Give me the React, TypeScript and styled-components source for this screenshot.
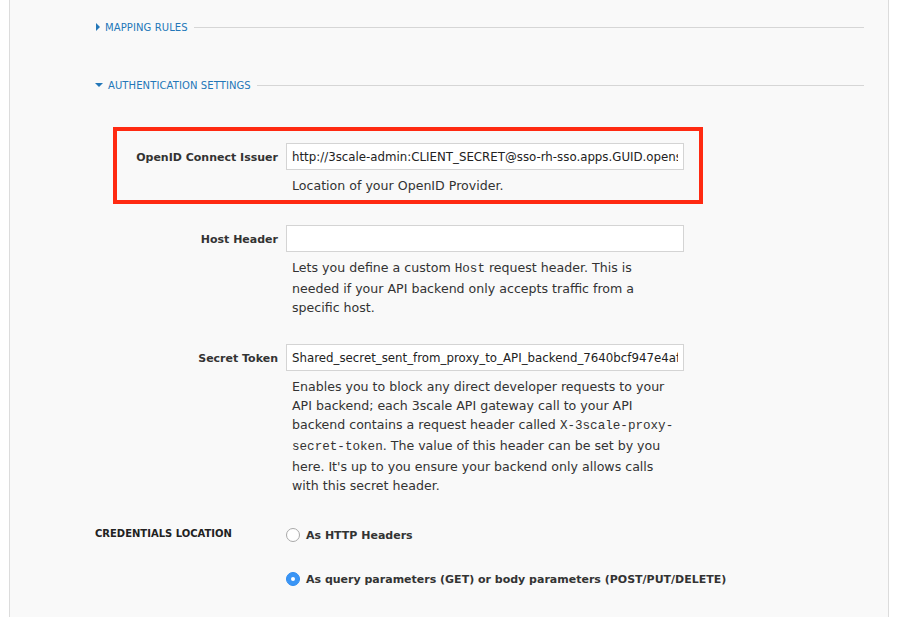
import React, { useState } from 'react'
import styled, { createGlobalStyle } from 'styled-components'

const GlobalStyle = createGlobalStyle`
  html, body {
    margin: 0;
    padding: 0;
    background: #ffffff;
  }
  body {
    font-family: "DejaVu Sans", "Liberation Sans", sans-serif;
    color: #333;
  }
`

const Panel = styled.div`
  margin-left: 9px;
  width: 880px;
  min-height: 617px;
  background: #f9f9f9;
  border-left: 1px solid #dcdcdc;
  border-right: 1px solid #dcdcdc;
  box-sizing: border-box;
  padding: 19px 24px 40px 85px;
`

const SectionHeader = styled.div<{ $open?: boolean }>`
  display: flex;
  align-items: center;
  gap: 5px;
  height: 16px;
  margin-bottom: ${p => (p.$open ? '34px' : '42px')};
  color: #2377b8;
  font-size: 10px;
  letter-spacing: 0.1px;
  text-transform: uppercase;
  cursor: pointer;
  &::after {
    content: '';
    flex: 1;
    height: 1px;
    background: #d6d6d6;
    margin-left: 1px;
  }
`

const Caret = styled.span<{ $open?: boolean }>`
  width: 0;
  height: 0;
  ${p =>
    p.$open
      ? `border-left: 4px solid transparent;
         border-right: 4px solid transparent;
         border-top: 4px solid #2377b8;`
      : `border-top: 4px solid transparent;
         border-bottom: 4px solid transparent;
         border-left: 4px solid #2377b8;
         margin-left: 1px;`}
`

const Fields = styled.div`
  display: flex;
  flex-direction: column;
  gap: 5px;
  margin-left: 18px;
`

const FieldRow = styled.div<{ $highlight?: boolean }>`
  width: 590px;
  box-sizing: border-box;
  border: 4px solid ${p => (p.$highlight ? '#ff2a12' : 'transparent')};
  padding: 12px 15px ${p => (p.$highlight ? '5px' : '2px')} 0;
  display: grid;
  grid-template-columns: 161px 398px;
  column-gap: 8px;
`

const Label = styled.label`
  text-align: right;
  font-weight: bold;
  font-size: 11px;
  color: #333;
  padding-top: 8px;
`

const Control = styled.div`
  display: flex;
  flex-direction: column;
`

const TextInput = styled.input`
  box-sizing: border-box;
  width: 398px;
  height: 27px;
  border: 1px solid #d4d4d4;
  background: #fff;
  padding: 0 5px;
  font-family: "DejaVu Sans", "Liberation Sans", sans-serif;
  font-size: 11.8px;
  color: #222;
  outline: none;
`

const Help = styled.p`
  margin: 6px 0 0;
  padding-left: 6px;
  width: 430px;
  white-space: nowrap;
  font-size: 12.6px;
  line-height: 19px;
  color: #333;
  code {
    font-family: "Liberation Mono", "DejaVu Sans Mono", monospace;
    font-size: 12.6px;
  }
`

const Credentials = styled.div`
  display: grid;
  grid-template-columns: 191px 1fr;
  margin: 26px 0 0 0;
`

const GroupTitle = styled.div`
  font-weight: bold;
  font-size: 10px;
  text-transform: uppercase;
  color: #222;
  padding-top: 1px;
`

const Options = styled.div`
  display: flex;
  flex-direction: column;
  gap: 28px;
`

const Option = styled.label`
  display: flex;
  align-items: center;
  gap: 6px;
  font-size: 11px;
  font-weight: bold;
  color: #333;
  height: 16px;
  cursor: pointer;
`

const Radio = styled.input.attrs({ type: 'radio' })`
  appearance: none;
  margin: 0;
  width: 14px;
  height: 14px;
  border-radius: 50%;
  border: 1px solid #a9a9a9;
  background: #fff;
  box-sizing: border-box;
  display: grid;
  place-items: center;
  &:checked {
    border-color: #2f8cf0;
    background: #3a95f5;
  }
  &:checked::after {
    content: '';
    width: 4px;
    height: 4px;
    border-radius: 50%;
    background: #fff;
  }
`

const App = () => {
  const [location, setLocation] = useState('query')

  return (
    <>
      <GlobalStyle />
      <Panel>
        <SectionHeader>
          <Caret />
          Mapping Rules
        </SectionHeader>
        <SectionHeader $open>
          <Caret $open />
          Authentication Settings
        </SectionHeader>

        <Fields>
          <FieldRow $highlight>
            <Label>OpenID Connect Issuer</Label>
            <Control>
              <TextInput
                defaultValue="http://3scale-admin:CLIENT_SECRET@sso-rh-sso.apps.GUID.openshift.example.com/auth/realms/3scale"
              />
              <Help>Location of your OpenID Provider.</Help>
            </Control>
          </FieldRow>

          <FieldRow>
            <Label>Host Header</Label>
            <Control>
              <TextInput defaultValue="" />
              <Help>
                Lets you define a custom <code>Host</code> request header. This is
                <br />
                needed if your API backend only accepts traffic from a
                <br />
                specific host.
              </Help>
            </Control>
          </FieldRow>

          <FieldRow>
            <Label>Secret Token</Label>
            <Control>
              <TextInput defaultValue="Shared_secret_sent_from_proxy_to_API_backend_7640bcf947e4af21" />
              <Help>
                Enables you to block any direct developer requests to your
                <br />
                API backend; each 3scale API gateway call to your API
                <br />
                backend contains a request header called <code>X-3scale-proxy-</code>
                <br />
                <code>secret-token</code>. The value of this header can be set by you
                <br />
                here. It's up to you ensure your backend only allows calls
                <br />
                with this secret header.
              </Help>
            </Control>
          </FieldRow>
        </Fields>

        <Credentials>
          <GroupTitle>Credentials Location</GroupTitle>
          <Options>
            <Option>
              <Radio
                name="credentials"
                checked={location === 'headers'}
                onChange={() => setLocation('headers')}
              />
              As HTTP Headers
            </Option>
            <Option>
              <Radio
                name="credentials"
                checked={location === 'query'}
                onChange={() => setLocation('query')}
              />
              As query parameters (GET) or body parameters (POST/PUT/DELETE)
            </Option>
          </Options>
        </Credentials>
      </Panel>
    </>
  )
}

export default App
